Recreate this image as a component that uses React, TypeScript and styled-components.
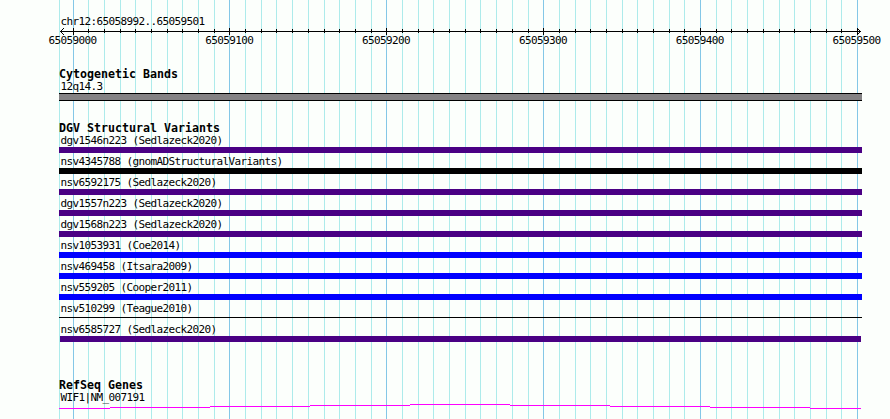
import React from "react";
import styled, { createGlobalStyle } from "styled-components";

const GlobalStyle = createGlobalStyle`
  body { margin: 0; background: #fcfffc; }
`;

const Browser = styled.main`
  position: relative;
  box-sizing: border-box;
  width: 890px;
  height: 419px;
  padding: 15px 28px 0 59px;
  overflow: hidden;
  background: #fcfffc;
  color: #000;
  font-family: "DejaVu Sans Mono", "Liberation Mono", monospace;
`;

const Grid = styled.svg`
  position: absolute;
  inset: 0;
  width: 890px;
  height: 419px;
`;

const Content = styled.div`
  position: relative;
  display: flex;
  flex-direction: column;
  width: 803px;
`;

const Label = styled.div`
  height: 13px;
  padding-left: 1.5px;
  font-size: 11px;
  line-height: 13px;
  letter-spacing: -0.622px;
  white-space: pre;
`;

const Heading = styled.h2`
  height: 12px;
  margin: 0;
  font-size: 11.63px;
  font-weight: bold;
  line-height: 12px;
  white-space: pre;
`;

const Ruler = styled.svg`
  display: block;
  width: 803px;
  height: 7px;
`;

const TickLabels = styled.div`
  display: flex;
  justify-content: space-between;
  width: 833.5px;
  margin: -1px 0 0 -12px;
`;

const Track = styled.section<{ $gap: number }>`
  margin-top: ${(p) => p.$gap}px;
`;

const Band = styled.div`
  box-sizing: border-box;
  height: 8px;
  border: solid #000;
  border-width: 1px 0;
  background: #848284;
`;

const Variant = styled.div`
  height: 21px;
`;

const Bar = styled.div<{ $color: string; $thin?: boolean; $inset?: boolean }>`
  height: ${(p) => (p.$thin ? 1 : 6)}px;
  margin: ${(p) => (p.$thin ? 2 : 0)}px ${(p) => (p.$inset ? 1 : 0)}px 0;
  background: ${(p) => p.$color};
`;

const Plot = styled.svg`
  display: block;
  width: 803px;
  height: 6px;
`;

const ticks = Array.from({ length: 51 }, (_, i) => ({
  x: Math.floor(73 + 15.69 * i),
  major: i % 10 === 0,
}));

const positions = ["65059000", "65059100", "65059200", "65059300", "65059400", "65059500"];

const indigo = "#4a0084";
const blue = "#0000ff";

const variants = [
  { name: "dgv1546n223 (Sedlazeck2020)", color: indigo },
  { name: "nsv4345788 (gnomADStructuralVariants)", color: "#000" },
  { name: "nsv6592175 (Sedlazeck2020)", color: indigo },
  { name: "dgv1557n223 (Sedlazeck2020)", color: indigo },
  { name: "dgv1568n223 (Sedlazeck2020)", color: indigo },
  { name: "nsv1053931 (Coe2014)", color: blue },
  { name: "nsv469458 (Itsara2009)", color: blue },
  { name: "nsv559205 (Cooper2011)", color: blue },
  { name: "nsv510299 (Teague2010)", color: "#000", thin: true },
  { name: "nsv6585727 (Sedlazeck2020)", color: indigo, inset: true },
];

export default function App() {
  return (
    <>
      <GlobalStyle />
      <Browser>
        <Grid viewBox="0 0 890 419" shapeRendering="crispEdges" aria-hidden="true">
          <rect x="59" y="0" width="1" height="419" fill="#adebeb" />
          {ticks.map((t) => (
            <rect key={t.x} x={t.x} y="0" width="1" height="419" fill={t.major ? "#84c7e7" : "#adebeb"} />
          ))}
        </Grid>
        <Content>
          <Label>chr12:65058992..65059501</Label>
          <Ruler viewBox="59 28 803 7" shapeRendering="crispEdges" aria-hidden="true">
            <rect x="60" y="31" width="801" height="1" />
            {ticks.map((t) => (
              <rect key={t.x} x={t.x} y={t.major ? 28 : 29} width="1" height={t.major ? 7 : 4} />
            ))}
            <path d="M61 30h1v1h-1zM62 29h1v1h-1zM63 28h1v1h-1zM61 32h1v1h-1zM62 33h1v1h-1zM63 34h1v1h-1z" />
            <path d="M859 30h1v1h-1zM858 29h1v1h-1zM857 28h1v1h-1zM859 32h1v1h-1zM858 33h1v1h-1zM857 34h1v1h-1z" />
          </Ruler>
          <TickLabels>
            {positions.map((p) => (
              <Label key={p}>{p}</Label>
            ))}
          </TickLabels>
          <Track $gap={21}>
            <Heading>Cytogenetic Bands</Heading>
            <Label>12q14.3</Label>
            <Band />
          </Track>
          <Track $gap={21}>
            <Heading>DGV Structural Variants</Heading>
            {variants.map((v) => (
              <Variant key={v.name}>
                <Label>{v.name}</Label>
                <Bar $color={v.color} $thin={v.thin} $inset={v.inset} />
              </Variant>
            ))}
          </Track>
          <Track $gap={35}>
            <Heading>RefSeq Genes</Heading>
            <Label>WIF1|NM_007191</Label>
            <Plot viewBox="59 404 803 6" shapeRendering="crispEdges" aria-hidden="true">
              <path
                fill="#ff00ff"
                d="M59 408h51v1h-51zM110 407h100v1h-100zM210 406h100v1h-100zM310 405h100v1h-100zM410 404h100v1h-100zM510 405h100v1h-100zM610 406h100v1h-100zM710 407h100v1h-100zM810 408h51v1h-51z"
              />
            </Plot>
          </Track>
        </Content>
      </Browser>
    </>
  );
}
